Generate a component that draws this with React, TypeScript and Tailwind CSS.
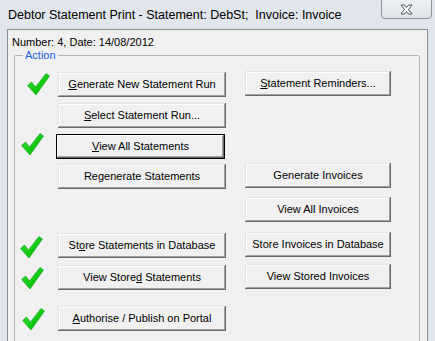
import React from 'react'

const ui = { fontFamily: '"Liberation Sans", Arial, sans-serif' }

function Check({ ml, mt }: { ml: string; mt: string }) {
    return (
        <svg width="23" height="23" viewBox="0 0 23 23" className={`${ml} ${mt} block`}>
            <defs>
                <linearGradient id="tick" x1="0" y1="0" x2="1" y2="1">
                    <stop offset="0" stopColor="#3ee23e" />
                    <stop offset="0.6" stopColor="#10c810" />
                    <stop offset="1" stopColor="#06a006" />
                </linearGradient>
            </defs>
            <path d="M0.5 12.5 L4.5 9 L8.5 14 L19 0.5 L22.5 3 L9 22 Z" fill="url(#tick)" stroke="#0b9e0b" strokeWidth="0.6" strokeLinejoin="round" />
        </svg>
    )
}

function Btn({ children, w, isDefault, extra = '' }: { children: React.ReactNode; w: string; isDefault?: boolean; extra?: string }) {
    return (
        <button
            className={`${w} ${extra} h-[25px] shrink-0 flex items-center justify-center bg-[#f0f0f0] text-[11px] leading-[13px] text-black ${isDefault
                ? 'border border-black shadow-[inset_-1px_-1px_0_#696969,inset_1px_1px_0_#ffffff,inset_-2px_-2px_0_#a0a0a0]'
                : 'shadow-[inset_-1px_-1px_0_#696969,inset_1px_1px_0_#e3e3e3,inset_-2px_-2px_0_#a0a0a0,inset_2px_2px_0_#ffffff]'
                }`}
            style={ui}
        >
            {children}
        </button>
    )
}

const U = ({ children }: { children: React.ReactNode }) => <span className="underline underline-offset-[1px]">{children}</span>

export default function App() {
    return (
        <div className="w-[435px] h-[341px] overflow-hidden bg-[#e1e6ec] flex flex-col" style={ui}>
            {/* Title bar */}
            <div className="h-[29px] shrink-0 flex items-start">
                <div className="pl-[8px] pt-[8px] text-[12.5px] leading-[15px] text-black whitespace-pre">
                    Debtor Statement Print - Statement: DebSt;  Invoice: Invoice
                </div>
                <div className="ml-auto mr-[3px] -mt-px w-[51px] h-[20px] rounded-b-[4px] border border-[#8d949c] bg-gradient-to-b from-[#eef1f4] to-[#dfe4e9] flex items-center justify-center">
                    <svg width="13" height="11" viewBox="0 0 13 11">
                        <path d="M1 1 H4.5 L6.5 3.5 L8.5 1 H12 L8.5 5.5 L12 10 H8.5 L6.5 7.5 L4.5 10 H1 L4.5 5.5 Z" fill="#ffffff" stroke="#4b5259" strokeWidth="1" strokeLinejoin="round" />
                    </svg>
                </div>
            </div>

            {/* Client area */}
            <div className="mx-[7px] flex-1 border border-[#8b9097] bg-[#f0f0f0] pt-[6px]">
                <div className="pl-[4px] text-[11px] leading-[13px] text-black">Number: 4, Date: 14/08/2012</div>

                <div className="relative ml-[6px] mt-[6px] w-[406px] h-[300px] border border-[#b5b5b5] rounded-[2px]">
                    <span className="absolute left-[8px] -top-[7px] px-[2px] bg-[#f0f0f0] text-[11px] leading-[13px] text-[#1560d8]">Action</span>

                    <div className="flex flex-col">
                        <div className="flex items-start mt-[16px]">
                            <div className="w-[43px]"><Check ml="ml-[12px]" mt="mt-[1px]" /></div>
                            <Btn w="w-[168px]"><span><U>G</U>enerate New Statement Run</span></Btn>
                            <Btn w="w-[146px]" extra="ml-[19px] -mt-px"><span><U>S</U>tatement Reminders...</span></Btn>
                        </div>
                        <div className="flex items-start mt-[6px]">
                            <div className="w-[43px]" />
                            <Btn w="w-[168px]"><span><U>S</U>elect Statement Run...</span></Btn>
                        </div>
                        <div className="flex items-start mt-[6px]">
                            <div className="w-[41px]"><Check ml="ml-[6px]" mt="-mt-px" /></div>
                            <Btn w="w-[169px]" isDefault><span><U>V</U>iew All Statements</span></Btn>
                        </div>
                        <div className="flex items-start mt-[5px]">
                            <div className="w-[43px]" />
                            <Btn w="w-[168px]">Regenerate Statements</Btn>
                            <Btn w="w-[146px]" extra="ml-[19px] -mt-px">Generate Invoices</Btn>
                        </div>
                        <div className="flex items-start mt-[8px]">
                            <div className="w-[230px]" />
                            <Btn w="w-[146px]">View All Invoices</Btn>
                        </div>
                        <div className="flex items-start mt-[11px]">
                            <div className="w-[43px]"><Check ml="ml-[5px]" mt="mt-[3px]" /></div>
                            <Btn w="w-[168px]"><span>St<U>o</U>re Statements in Database</span></Btn>
                            <Btn w="w-[146px]" extra="ml-[19px] -mt-px">Store Invoices in Database</Btn>
                        </div>
                        <div className="flex items-start mt-[6px]">
                            <div className="w-[43px]"><Check ml="ml-[6px]" mt="mt-[2px]" /></div>
                            <Btn w="w-[168px]"><span>View Store<U>d</U> Statements</span></Btn>
                            <Btn w="w-[146px]" extra="ml-[19px] -mt-px">View Stored Invoices</Btn>
                        </div>
                        <div className="flex items-start mt-[16px]">
                            <div className="w-[43px]"><Check ml="ml-[7px]" mt="mt-[2px]" /></div>
                            <Btn w="w-[168px]"><span><U>A</U>uthorise / Publish on Portal</span></Btn>
                        </div>
                    </div>
                </div>
            </div>
        </div>
    )
}
